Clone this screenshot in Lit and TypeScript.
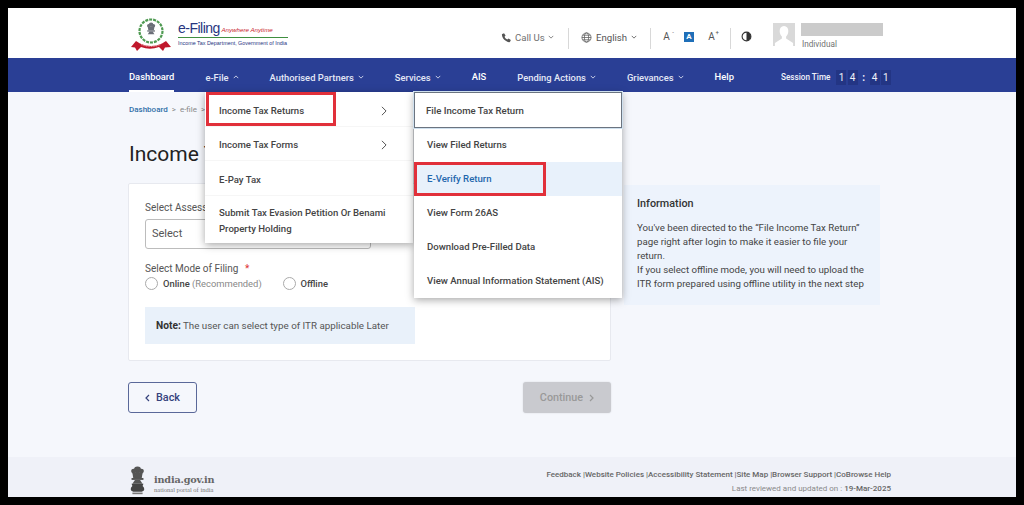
import { LitElement, css, html, svg } from "lit";
import { customElement } from "lit/decorators.js";

const chevron = (cls = "caret") => html`<svg class=${cls} viewBox="0 0 8 5"><path d="M1 1l3 3 3-3" fill="none" stroke="currentColor" stroke-width="1.1"/></svg>`;
const right = html`<svg class="arrow" viewBox="0 0 7 12"><path d="M1 1l5 5-5 5" fill="none" stroke="#555" stroke-width="1.2"/></svg>`;

// lion capital, used small in the footer and inside the seal
const capital = (c: string) => svg`
  <g fill=${c}>
    <circle cx="12" cy="6" r="4.2"/><circle cx="7.6" cy="7.5" r="3"/><circle cx="16.4" cy="7.5" r="3"/>
    <path d="M6 10h12l-1 6h-10z"/>
    <rect x="5" y="16" width="14" height="2.4"/>
    <path d="M9 18.4h6l3 4.6H6z"/>
  </g>`;

@customElement("app-root")
export class AppRoot extends LitElement {
  static styles = css`
    :host { display: block; width: 1024px; height: 505px; background: #000; padding: 8px; box-sizing: border-box; font-family: Roboto, "Liberation Sans", sans-serif; color: #333; overflow: hidden; }
    .page { height: 489px; background: #f5f7fc; display: flex; flex-direction: column; position: relative; overflow: hidden; }

    .top { height: 50px; background: #fff; display: flex; align-items: flex-start; padding-left: 121px; flex: none; }
    .logo { display: flex; align-items: flex-start; gap: 5px; width: 300px; margin-top: 8px; }
    .seal { width: 44px; height: 34px; margin-top: 2px; }
    .brand { width: 110px; padding-top: 4px; }
    .brand .l1 { display: flex; align-items: baseline; gap: 1.5px; height: 17px; border-bottom: 1.2px solid #3f8f3f; }
    .brand b { font: 400 14px "Liberation Sans", sans-serif; color: #27367f; letter-spacing: -0.5px; }
    .brand i { font: italic 400 6.2px "Liberation Sans", sans-serif; color: #c8202c; white-space: nowrap; position: relative; top: -1px; }
    .brand small { display: block; font: 400 5.4px "Liberation Sans", sans-serif; color: #27367f; margin-top: 2px; white-space: nowrap; }
    .tools { display: flex; align-items: flex-start; margin-left: 72px; font-size: 9.6px; color: #707070; margin-top: 16px; }
    .tool { display: flex; align-items: center; gap: 3px; height: 26px; }
    .call { width: 67px; }
    .lang { width: 81px; padding-left: 12px; box-sizing: border-box; gap: 4px; color: #555; }
    .sep { width: 1px; height: 21px; background: #d8d8d8; margin-top: 4px; }
    .sizes { display: flex; align-items: center; gap: 12px; width: 79px; height: 25px; padding-left: 10px; box-sizing: border-box; color: #555; font-size: 10px; }
    .sizes span { width: 11px; text-align: center; position: relative; }
    .sizes sup { position: absolute; top: -2px; right: -2px; font-size: 6px; line-height: 1; }
    .sizes .on { background: #1f6fb8; color: #fff; font-size: 8px; font-weight: 700; line-height: 10px; height: 10px; width: 10px; }
    .contrast { width: 42px; height: 25px; align-items: center; padding-left: 10px; box-sizing: border-box; display: flex; }
    .contrast svg { width: 11px; height: 11px; }
    .caret { width: 6px; height: 4px; flex: none; }
    .user { display: flex; gap: 6px; margin-top: -1px; }
    .avatar { width: 22px; height: 23px; display: block; }
    .blank { width: 82px; height: 13px; background: #cbcbcb; }
    .role { font-size: 8.2px; color: #707070; margin-top: 3px; line-height: 10px; padding-left: 1px; }

    nav { height: 34px; background: #2a3f95; display: flex; align-items: center; padding-left: 121px; gap: 31px; color: #e4e8f5; font-size: 9.4px; font-weight: 500; flex: none; position: relative; z-index: 2; }
    nav > a { display: flex; align-items: center; gap: 4px; height: 34px; box-sizing: border-box; white-space: nowrap; padding-top: 4px; }
    nav > a.plain { color: #fff; padding-top: 2px; }
    nav > a.active { border-bottom: 2px solid #fff; padding-top: 4px; }
    .flip { transform: rotate(180deg); }
    .session { display: flex; align-items: center; margin: 4px 0 0 16px; font-size: 8.2px; color: #f0f2fa; }
    .digits { display: flex; margin-left: 6px; font-size: 10px; align-items: center; font-weight: 400; }
    .digits span { width: 10px; height: 15px; line-height: 15px; text-align: center; background: #233584; margin-right: 1.2px; }
    .digits .colon { background: none; width: 9.5px; font-weight: 700; }

    .menu { position: absolute; top: 34px; background: #fff; box-shadow: 0 2px 8px rgba(0, 0, 0, .35); color: #444; font-size: 9.6px; font-weight: 500; width: 208px; line-height: 16px; }
    .m1 { left: 197px; }
    .m2 { left: 406px; }
    .m1 .row { height: 34.5px; display: flex; align-items: center; justify-content: space-between; padding: 4px 26px 0 14px; box-sizing: border-box; border-bottom: 1px solid #f6f6f6; position: relative; }
    .m1 .row.last { height: 47px; border: 0; align-items: flex-start; padding-top: 9px; }
    .arrow { width: 6px; height: 10px; }
    .m2 .row { height: 34px; display: flex; align-items: center; padding-left: 13px; position: relative; box-sizing: border-box; }
    .m2 .row.first { height: 36px; padding: 1px 0 0 11px; border: 1.5px solid #6b7480; outline: 1px solid #cfe0ee; }
    .m2 .row.hi { background: #e8f1fb; color: #1f67ad; }
    .mark { position: absolute; border: 3px solid #e1303a; box-sizing: border-box; pointer-events: none; }
    .m1 .mark { left: 1px; top: 0; width: 130px; height: 34px; }
    .m2 .mark { left: 0; top: 0; width: 132px; height: 34px; }

    main { flex: 1; padding-left: 121px; min-height: 0; }
    .crumb { display: flex; align-items: center; gap: 4px; height: 16px; margin-top: 9px; font-size: 8px; color: #888; }
    .crumb a { color: #2f6fa8; font-weight: 500; }
    h1 { font-size: 21px; font-weight: 400; color: #222; margin: 0; line-height: 26px; padding-top: 24px; }
    .cols { display: flex; gap: 13px; margin: 16px 0 0 -1px; align-items: flex-start; }
    .card { width: 483px; height: 178px; background: #fff; border: 1px solid #e7e9ef; box-sizing: border-box; border-radius: 2px; padding: 18px 0 0 16px; }
    label { display: block; font-size: 10px; color: #555; line-height: 12px; }
    label em { color: #d33; font-style: normal; margin-left: 4px; }
    .select { width: 226px; height: 30px; box-sizing: border-box; border: 1px solid #bcbcbc; border-radius: 3px; margin-top: 5px; padding-left: 6px; font-size: 11px; line-height: 28px; color: #555; margin-bottom: 14px; }
    .radios { display: flex; font-size: 9.4px; height: 17px; align-items: center; color: #444; font-weight: 500; }
    .radio { display: flex; align-items: center; gap: 5px; width: 137.5px; }
    .radio i { width: 11px; height: 11px; border: 1px solid #aaa; border-radius: 50%; background: #fff; }
    .radio span { color: #888; font-weight: 400; }
    .note { width: 270px; height: 37px; margin-top: 15px; background: #e9f1fa; font-size: 9.8px; line-height: 37px; padding-left: 11px; box-sizing: border-box; color: #555; white-space: nowrap; }
    .note b { color: #333; font-weight: 700; font-size: 10.2px; }
    .info { width: 256px; height: 120px; margin-top: 2px; background: #edf3fc; box-sizing: border-box; padding: 12px 0 0 13px; font-size: 9.7px; line-height: 14px; color: #444; }
    .info h3 { font-size: 10.8px; font-weight: 500; margin: 0 0 10px; line-height: 14px; color: #333; }
    .info p { margin: 0; white-space: nowrap; }
    .actions { display: flex; justify-content: space-between; width: 483px; margin: 21px 0 0 -1px; }
    .btn { height: 31px; box-sizing: border-box; border-radius: 3px; display: flex; align-items: center; justify-content: center; gap: 6px; font-size: 10.8px; font-weight: 500; }
    .back { width: 69px; border: 1px solid #5a6899; color: #35427c; }
    .next { width: 88px; background: #c9cacf; color: #999; box-shadow: 0 0 2px rgba(0,0,0,.12); }
    .btn svg { width: 5px; height: 8px; }

    footer { height: 40px; flex: none; background: #eff1f8; display: flex; align-items: flex-start; justify-content: space-between; padding: 0 125px 0 121px; }
    .gov { display: flex; align-items: flex-start; gap: 8px; padding-top: 8px; }
    .gov svg { width: 17px; height: 30px; }
    .gov div { padding-top: 9px; }
    .gov b { display: block; font: 700 9.7px "DejaVu Serif", "Liberation Serif", serif; color: #666; letter-spacing: -.2px; line-height: 12px; }
    .gov small { display: block; font: 400 6.5px "Liberation Serif", serif; color: #777; line-height: 10px; margin-top: -1px; }
    .links { text-align: right; font-size: 8px; line-height: 14px; color: #666; font-weight: 500; padding-top: 11px; }
    .links div + div { color: #8a8a8a; font-weight: 400; }
    .links div + div b { color: #666; font-weight: 500; }
  `;

  render() {
    return html`<div class="page">
      <div class="top">
        <div class="logo">
          <svg class="seal" viewBox="0 0 44 34">
            <circle cx="22" cy="13" r="11.500" fill="none" stroke="#4f9a52" stroke-width="2.200" stroke-dasharray="3 1"/>
            <circle cx="22" cy="13" r="9.400" fill="#fff"/>
            <g transform="translate(15.500 3.500) scale(.55)">${capital("#6b6f78")}</g>
            <path d="M2 29l5-6 4 2.500q11 5 22 0l4-2.500 5 6-6 .5-2 3.500-4-4q-9 3.500-18 0l-4 4-2-3.500z" fill="#c0182c"/>
            <path d="M12 26.500q10 4 20 0" fill="none" stroke="#f3c6c6" stroke-width=".8" stroke-dasharray="1 .7"/>
          </svg>
          <div class="brand">
            <div class="l1"><b>e-Filing</b><i>Anywhere Anytime</i></div>
            <small>Income Tax Department, Government of India</small>
          </div>
        </div>
        <div class="tools">
          <div class="tool call">
            <svg width="11" height="11" viewBox="0 0 24 24"><path d="M6.600 2.500l3.400 5-2.200 2.600c1.200 2.800 3.300 4.900 6.100 6.100l2.600-2.200 5 3.400-1.800 4c-.4.6-1 .9-1.700.8C9.800 21.200 2.800 14.200 2 6c-.1-.7.2-1.300.8-1.700z" fill="#555"/></svg>
            Call Us ${chevron()}
          </div>
          <div class="sep"></div>
          <div class="tool lang">
            <svg width="11" height="11" viewBox="0 0 12 12" fill="none" stroke="#555" stroke-width=".8"><circle cx="6" cy="6" r="5"/><ellipse cx="6" cy="6" rx="2.300" ry="5"/><path d="M1 6h10M1.700 3.500h8.600M1.700 8.500h8.600"/></svg>
            English ${chevron()}
          </div>
          <div class="sep"></div>
          <div class="sizes"><span>A<sup>-</sup></span><span class="on">A</span><span>A<sup>+</sup></span></div>
          <div class="sep"></div>
          <div class="contrast"><svg viewBox="0 0 12 12"><circle cx="6" cy="6" r="4.800" fill="#fff" stroke="#333" stroke-width="1.200"/><path d="M6 1.200a4.800 4.800 0 010 9.600z" fill="#333"/></svg></div>
          <div class="user">
            <svg class="avatar" viewBox="0 0 23 23" preserveAspectRatio="none"><rect width="23" height="23" fill="#d9d9d9"/><path d="M11.500 3c-3 0-4.500 2.300-4.500 5 0 2.500 1 4.500 2.300 5.500v2L2 20v3h19v-3l-7.300-4.500v-2c1.300-1 2.300-3 2.300-5.500 0-2.700-1.500-5-4.500-5z" fill="#fff"/></svg>
            <div><div class="blank"></div><div class="role">Individual</div></div>
          </div>
        </div>
      </div>

      <nav>
        <a class="plain active">Dashboard</a>
        <a>e-File ${chevron("caret flip")}</a>
        <a>Authorised Partners ${chevron()}</a>
        <a>Services ${chevron()}</a>
        <a class="plain">AIS</a>
        <a>Pending Actions ${chevron()}</a>
        <a>Grievances ${chevron()}</a>
        <a class="plain">Help</a>
        <div class="session">Session Time
          <div class="digits"><span>1</span><span>4</span><span class="colon">:</span><span>4</span><span>1</span></div>
        </div>
        <div class="menu m1">
          <div class="row">Income Tax Returns ${right}<div class="mark"></div></div>
          <div class="row">Income Tax Forms ${right}</div>
          <div class="row">E-Pay Tax</div>
          <div class="row last"><span>Submit Tax Evasion Petition Or Benami<br />Property Holding</span></div>
        </div>
        <div class="menu m2">
          <div class="row first">File Income Tax Return</div>
          <div class="row">View Filed Returns</div>
          <div class="row hi">E-Verify Return<div class="mark"></div></div>
          <div class="row">View Form 26AS</div>
          <div class="row">Download Pre-Filled Data</div>
          <div class="row">View Annual Information Statement (AIS)</div>
        </div>
      </nav>

      <main>
        <div class="crumb"><a>Dashboard</a><span>&gt;</span><span>e-file</span><span>&gt;</span><span>Income Tax Returns</span></div>
        <h1>Income Tax Return</h1>
        <div class="cols">
          <div class="card">
            <label>Select Assessment Year <em>*</em></label>
            <div class="select">Select</div>
            <label>Select Mode of Filing <em>*</em></label>
            <div class="radios">
              <div class="radio"><i></i><div>Online <span>(Recommended)</span></div></div>
              <div class="radio"><i></i><div>Offline</div></div>
            </div>
            <div class="note"><b>Note:</b> The user can select type of ITR applicable Later</div>
          </div>
          <div class="info">
            <h3>Information</h3>
            <p>You've been directed to the “File Income Tax Return”<br />page right after login to make it easier to file your<br />return.<br />If you select offline mode, you will need to upload the<br />ITR form prepared using offline utility in the next step</p>
          </div>
        </div>
        <div class="actions">
          <div class="btn back"><svg viewBox="0 0 5 8"><path d="M4 1L1 4l3 3" fill="none" stroke="currentColor" stroke-width="1.200"/></svg>Back</div>
          <div class="btn next">Continue<svg viewBox="0 0 5 8"><path d="M1 1l3 3-3 3" fill="none" stroke="currentColor" stroke-width="1.200"/></svg></div>
        </div>
      </main>

      <footer>
        <div class="gov">
          <svg viewBox="2 0 20 37" preserveAspectRatio="none">
            ${capital("#555")}
            <path d="M5 23h14l-1 3q2 2 2 4t-3 3H7q-3-1-3-3t2-4z" fill="#444"/>
            <rect x="6" y="34" width="12" height="2" fill="#777"/>
          </svg>
          <div><b>india.gov.in</b><small>national portal of india</small></div>
        </div>
        <div class="links">
          <div>Feedback |Website Policies |Accessibility Statement |Site Map |Browser Support |CoBrowse Help</div>
          <div>Last reviewed and updated on : <b>19-Mar-2025</b></div>
        </div>
      </footer>
    </div>`;
  }
}
